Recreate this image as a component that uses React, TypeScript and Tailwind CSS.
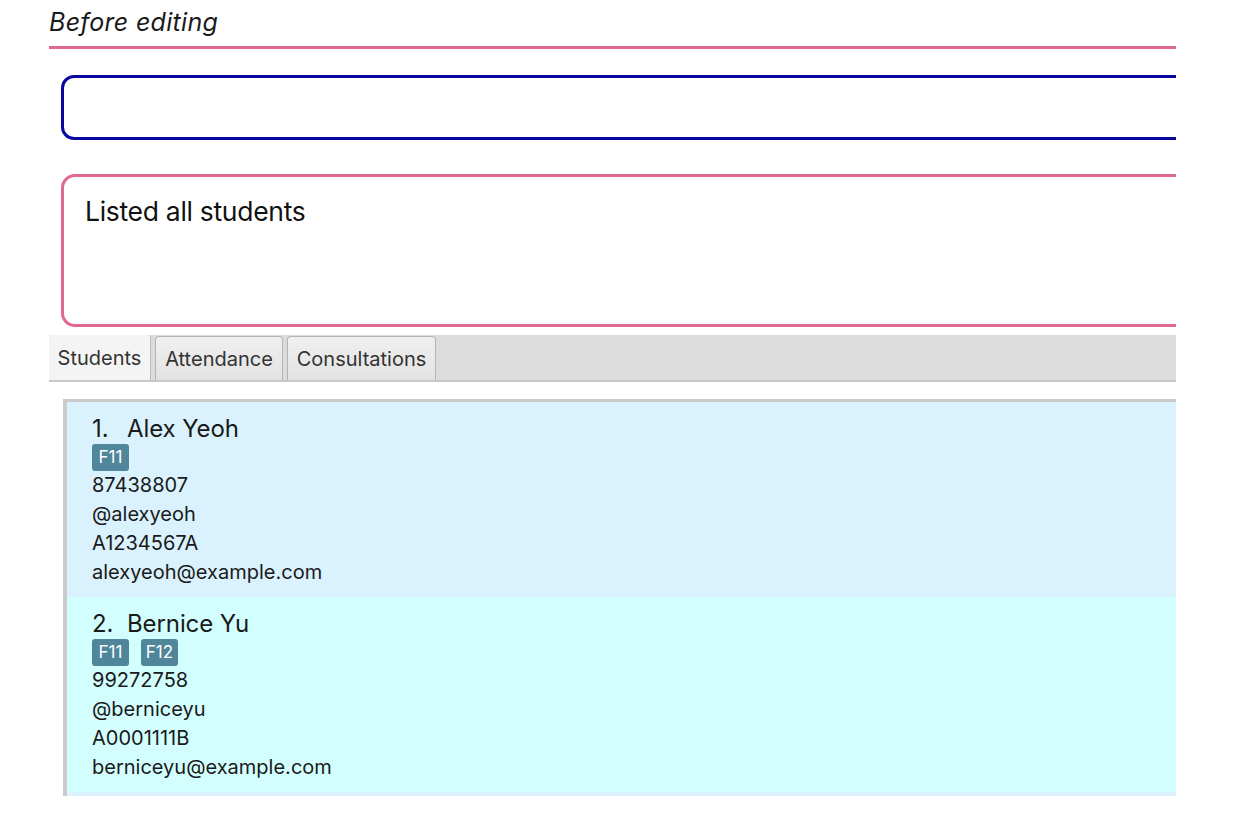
import React from "react";

const font = { fontFamily: "Inter, 'Noto Sans', sans-serif" };

function Tag({ label }: { label: string }) {
  return (
    <span className="inline-flex h-[27px] w-[37px] items-center justify-center rounded-[3px] bg-[#4f8699] text-[17px] leading-none text-white">
      {label}
    </span>
  );
}

function Card({
  idx,
  name,
  tags,
  phone,
  handle,
  id,
  email,
  bg,
}: {
  idx: number;
  name: string;
  tags: string[];
  phone: string;
  handle: string;
  id: string;
  email: string;
  bg: string;
}) {
  return (
    <div className={`${bg} h-[195px] pl-[25px] pt-[11px] text-[#1a1a1a]`}>
      <div className="flex h-[31px] items-center text-[24px] leading-none tracking-[-0.1px]">
        <span className="w-[35px]">{idx}.</span>
        <span>{name}</span>
      </div>
      <div className="flex h-[27px] items-center gap-[12px]">
        {tags.map((t) => (
          <Tag key={t} label={t} />
        ))}
      </div>
      <div className="text-[20px] leading-[29px]">{phone}</div>
      <div className="text-[20px] leading-[29px]">{handle}</div>
      <div className="text-[20px] leading-[29px]">{id}</div>
      <div className="text-[20px] leading-[29px]">{email}</div>
    </div>
  );
}

export default function App() {
  return (
    <div className="h-[836px] w-[1252px] bg-white" style={font}>
      <div className="h-[46px] pl-[49px] pt-[7px] text-[25px] italic leading-[30px] tracking-[0.3px] text-[#1a1a1a]">
        Before editing
      </div>
      <div className="ml-[49px] w-[1127px] overflow-hidden">
        <div className="h-[3px] bg-[#e06990]" />
        <div className="ml-[12px] mt-[26px] h-[65px] w-[1200px] rounded-[13px] border-[3px] border-[#0808a0]" />
        <div className="ml-[12px] mt-[34px] h-[153px] w-[1200px] rounded-[14px] border-[3px] border-[#e06990] pl-[21px] pt-[18px] text-[26.5px] leading-[32px] tracking-[-0.3px] text-[#111]">
          Listed all students
        </div>
        <div className="mt-[8px] flex h-[47px] items-end gap-[4px] border-b-[2px] border-[#c8c8c8] bg-[#dcdcdc]">
          <div className="flex h-[45px] w-[102px] items-center justify-center rounded-t-[3px] border-r border-[#bcbcbc] bg-[#f4f4f4] pt-[1px] text-[20px] text-[#333]">
            Students
          </div>
          <div className="flex h-[44px] w-[128px] items-center justify-center rounded-t-[4px] border border-b-0 border-[#b5b5b5] bg-gradient-to-b from-[#f0f0f0] to-[#e2e2e2] text-[20px] text-[#333]">
            Attendance
          </div>
          <div className="flex h-[44px] w-[149px] items-center justify-center rounded-t-[4px] border border-b-0 border-[#b5b5b5] bg-gradient-to-b from-[#f0f0f0] to-[#e2e2e2] text-[20px] text-[#333]">
            Consultations
          </div>
        </div>
        <div className="ml-[14px] mt-[17px] w-[1200px] border-l-[4px] border-t-[3px] border-[#cbcbcb] bg-[#d9f2fd] pb-[4px]">
          <Card
            idx={1}
            name="Alex Yeoh"
            tags={["F11"]}
            phone="87438807"
            handle="@alexyeoh"
            id="A1234567A"
            email="alexyeoh@example.com"
            bg="bg-[#d9f2fd]"
          />
          <Card
            idx={2}
            name="Bernice Yu"
            tags={["F11", "F12"]}
            phone="99272758"
            handle="@berniceyu"
            id="A0001111B"
            email="berniceyu@example.com"
            bg="bg-[#d3fefe]"
          />
        </div>
      </div>
    </div>
  );
}
